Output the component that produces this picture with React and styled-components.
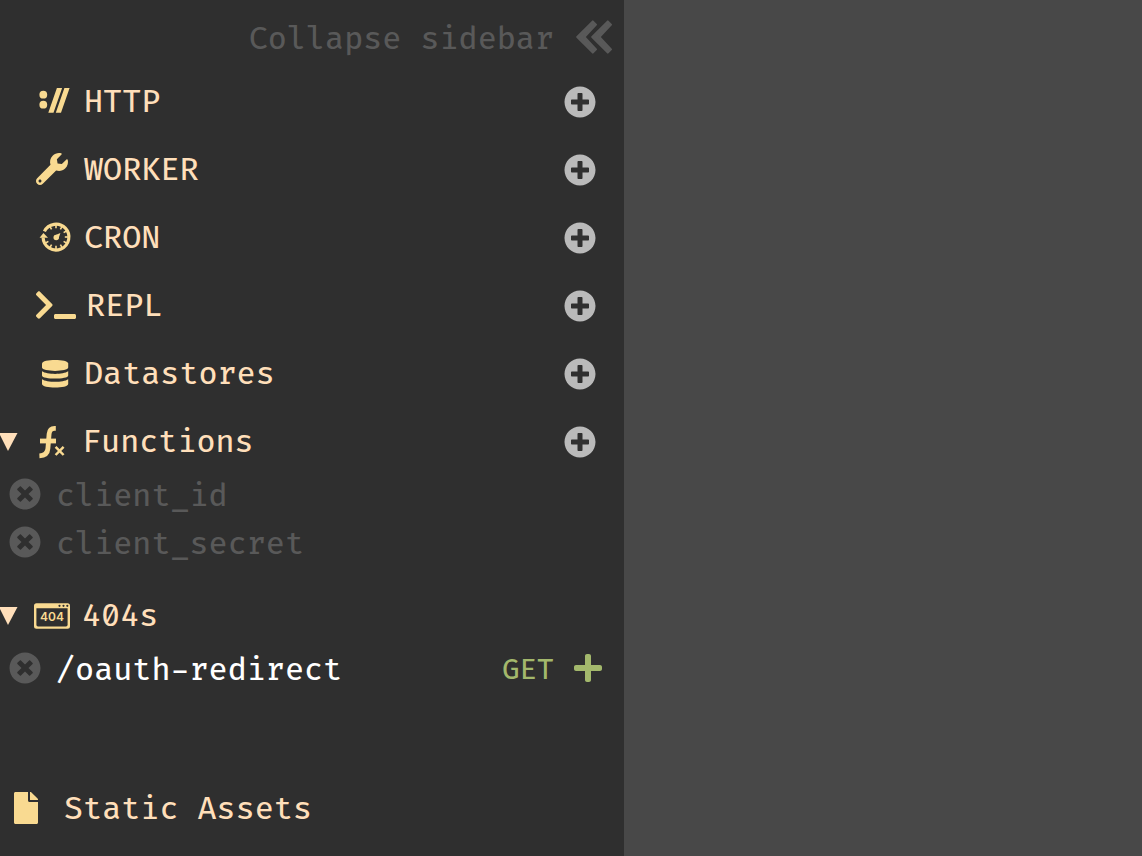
import React from "react";
import styled, { createGlobalStyle } from "styled-components";
import { FaWrench, FaTerminal, FaPlusCircle, FaTimesCircle, FaPlus, FaFile } from "react-icons/fa";

const GlobalStyle = createGlobalStyle`
  *, *::before, *::after { box-sizing: border-box; }
  body {
    margin: 0;
    background: #484848;
    font-family: "Fira Code", "DejaVu Sans Mono", "Liberation Mono", monospace;
    line-height: 40px;
  }
`;

const Page = styled.div`
  display: flex;
  min-height: 100vh;
`;

const Sidebar = styled.aside`
  display: flex;
  flex-direction: column;
  flex: 0 0 624px;
  padding: 8px 0 18px;
  background: #2f2f2f;
  overflow: hidden;
  font-size: 31px;
  font-weight: 450;
`;

const Workspace = styled.main`
  flex: 1;
  background: #484848;
`;

const IconButton = styled.button`
  display: flex;
  align-items: center;
  flex: none;
  padding: 0;
  border: 0;
  background: none;
  color: ${(p) => p.$color};
  cursor: pointer;
  svg { display: block; }
`;

const AddButton = styled(IconButton)`
  padding-top: 2px;
`;

const ItemButton = styled(IconButton)`
  padding-bottom: 2px;
`;

const CollapseButton = styled.button`
  display: flex;
  align-items: center;
  justify-content: flex-end;
  gap: 22px;
  height: 60px;
  margin-bottom: 3px;
  padding: 0 12px 0 0;
  border: 0;
  background: none;
  color: #595959;
  font: inherit;
  cursor: pointer;
`;

const Label = styled.span`
  padding-top: 4px;
`;

const Sections = styled.div`
  display: flex;
  flex-direction: column;
  gap: 8px;
`;

const Section = styled.section`
  margin-top: ${(p) => (p.$spaced ? 10 : 0)}px;
`;

const SectionHeader = styled.header`
  display: flex;
  align-items: center;
  height: 60px;
  padding-right: 28px;
`;

const ToggleSlot = styled.div`
  width: 36px;
  flex: none;
`;

const IconSlot = styled.div`
  width: ${(p) => p.$width}px;
  flex: none;
  color: #f9da91;
  svg { display: block; overflow: visible; }
`;

const Title = styled.h2`
  flex: 1;
  margin: 0;
  padding-top: 4px;
  color: #ffdfba;
  font-size: inherit;
  font-weight: inherit;
`;

const List = styled.ul`
  margin: 0;
  padding: 0;
  list-style: none;
`;

const Item = styled.li`
  display: flex;
  align-items: center;
  height: 48px;
  padding: 0 20px 0 9px;
  color: ${(p) => (p.$active ? "#ffffff" : "#595959")};
`;

const ItemName = styled(Label)`
  flex: 1;
  margin-left: 15px;
`;

const Method = styled(Label)`
  margin-right: 18px;
  color: #a3b86c;
  font-size: 28px;
`;

const AssetsLink = styled.a`
  display: flex;
  align-items: center;
  gap: 22px;
  height: 60px;
  margin-top: auto;
  padding-left: 10px;
  color: #ffdfba;
  text-decoration: none;
  svg { color: #f9da91; }
`;

const Glyph = ({ children }) => (
  <svg width="40" height="36" viewBox="0 0 40 36" fill="currentColor" aria-hidden="true">
    {children}
  </svg>
);

const ProtocolIcon = () => (
  <Glyph>
    <circle cx="7.3" cy="11.7" r="3.9" />
    <circle cx="7.3" cy="21.7" r="3.9" />
    <path d="M12.3 29.7 L20.9 5 H26.1 L17.5 29.7Z M19.8 29.7 L28.4 5 H33.6 L25 29.7Z" />
  </Glyph>
);

const CronIcon = () => (
  <Glyph>
    <path
      d="M8.4 12.4 A12.9 12.9 0 1 1 7.1 18.5"
      fill="none"
      stroke="currentColor"
      strokeWidth="3.2"
    />
    <path d="M3.6 18.8 L7.4 13.9 L12 18.8Z" />
    {[0, 30, 60, 90, 120, 150, 180, 210, 240, 330].map((a) => (
      <path key={a} d="M19.2 6 H20.8 V9.2 H19.2Z" transform={`rotate(${a} 20 18)`} />
    ))}
    <circle cx="20.2" cy="18.5" r="2.7" />
    <path d="M18.4 16.6 L24.4 14 L22.4 20Z" />
  </Glyph>
);

const DatabaseIcon = () => (
  <Glyph>
    <path d="M6 8.5 C6 3.9 32.2 3.9 32.2 8.5 V12.6 C32.2 17 6 17 6 12.6Z" />
    <path d="M6 16.3 C11 19.8 27.2 19.8 32.2 16.3 V20.4 C32.2 24.6 6 24.6 6 20.4Z" />
    <path d="M6 24.2 C11 27.7 27.2 27.7 32.2 24.2 V29 C32.2 33.7 6 33.7 6 29Z" />
  </Glyph>
);

const FunctionIcon = () => (
  <Glyph>
    <g fill="none" stroke="currentColor">
      <path
        d="M19.8 5.4 H18.6 C14.8 5.4 13.4 7.6 13.1 11 L11.9 25.5 C11.6 30 9 32.6 3.4 32.8"
        strokeWidth="4.8"
      />
      <path d="M4 18 H20" strokeWidth="4.8" />
      <path d="M19.6 23.8 L27.6 32 M27.6 23.8 L19.6 32" strokeWidth="2.5" />
    </g>
  </Glyph>
);

const NotFoundIcon = () => (
  <Glyph>
    <path
      fillRule="evenodd"
      d="M0.5 6.2 H31.5 Q34 6.2 34 8.7 V29.3 Q34 31.8 31.5 31.8 H0.5 Q-2 31.8 -2 29.3 V8.7 Q-2 6.2 0.5 6.2Z M0.4 11.2 V27.8 Q0.4 29.4 2 29.4 H30 Q31.6 29.4 31.6 27.8 V11.2Z"
    />
    <g fill="#2f2f2f">
      <circle cx="23.5" cy="8.8" r="1.1" />
      <circle cx="27.5" cy="8.8" r="1.1" />
      <circle cx="31.3" cy="8.8" r="1.1" />
    </g>
    <text x="16" y="24" textAnchor="middle" fontFamily="Inter, sans-serif" fontSize="12" fontWeight="600">
      404
    </text>
  </Glyph>
);

const DoubleChevron = () => (
  <svg width="36" height="36" viewBox="0 0 36 36" fill="currentColor" stroke="currentColor" strokeWidth="2" strokeLinejoin="round" aria-hidden="true">
    <path d="M1.2 17 L16.8 1.4 L20 4.6 L8.4 17 L20 29.4 L16.8 32.6Z" />
    <path d="M16.2 17 L31.8 1.4 L35 4.6 L23.4 17 L35 29.4 L31.8 32.6Z" />
  </svg>
);

const Triangle = () => (
  <svg width="18" height="18" viewBox="0 0 18 18" fill="currentColor" aria-hidden="true">
    <path d="M-1 0 H17.5 L8 18Z" />
  </svg>
);

const sections = [
  { title: "HTTP", icon: <ProtocolIcon />, addable: true },
  { title: "WORKER", icon: <FaWrench size={32} />, addable: true },
  { title: "CRON", icon: <CronIcon />, addable: true },
  { title: "REPL", icon: <FaTerminal size={40} />, iconWidth: 50, addable: true },
  { title: "Datastores", icon: <DatabaseIcon />, addable: true },
  {
    title: "Functions",
    icon: <FunctionIcon />,
    iconWidth: 46,
    addable: true,
    items: [{ name: "client_id" }, { name: "client_secret" }],
  },
  {
    title: "404s",
    icon: <NotFoundIcon />,
    iconWidth: 46,
    spaced: true,
    items: [{ name: "/oauth-redirect", method: "GET" }],
  },
];

const SidebarSection = ({ title, icon, iconWidth = 48, addable, items, spaced }) => (
  <Section $spaced={spaced}>
    <SectionHeader>
      <ToggleSlot>
        {items && (
          <AddButton type="button" $color="#ffdfba" aria-label={`Toggle ${title}`} aria-expanded="true">
            <Triangle />
          </AddButton>
        )}
      </ToggleSlot>
      <IconSlot $width={iconWidth}>{icon}</IconSlot>
      <Title>{title}</Title>
      {addable && (
        <AddButton type="button" $color="#bababa" aria-label={`Add ${title}`}>
          <FaPlusCircle size={32} />
        </AddButton>
      )}
    </SectionHeader>
    {items && (
      <List>
        {items.map(({ name, method }) => (
          <Item key={name} $active={Boolean(method)}>
            <ItemButton type="button" $color="#595959" aria-label={`Remove ${name}`}>
              <FaTimesCircle size={32} />
            </ItemButton>
            <ItemName>{name}</ItemName>
            {method && (
              <>
                <Method>{method}</Method>
                <ItemButton type="button" $color="#a3b86c" aria-label={`Create ${name}`}>
                  <FaPlus size={32} />
                </ItemButton>
              </>
            )}
          </Item>
        ))}
      </List>
    )}
  </Section>
);

export default function App() {
  return (
    <Page>
      <GlobalStyle />
      <Sidebar>
        <CollapseButton type="button">
          <Label>Collapse sidebar</Label>
          <DoubleChevron />
        </CollapseButton>
        <Sections>
          {sections.map((s) => (
            <SidebarSection key={s.title} {...s} />
          ))}
        </Sections>
        <AssetsLink href="#static-assets">
          <FaFile size={32} />
          <Label>Static Assets</Label>
        </AssetsLink>
      </Sidebar>
      <Workspace />
    </Page>
  );
}
